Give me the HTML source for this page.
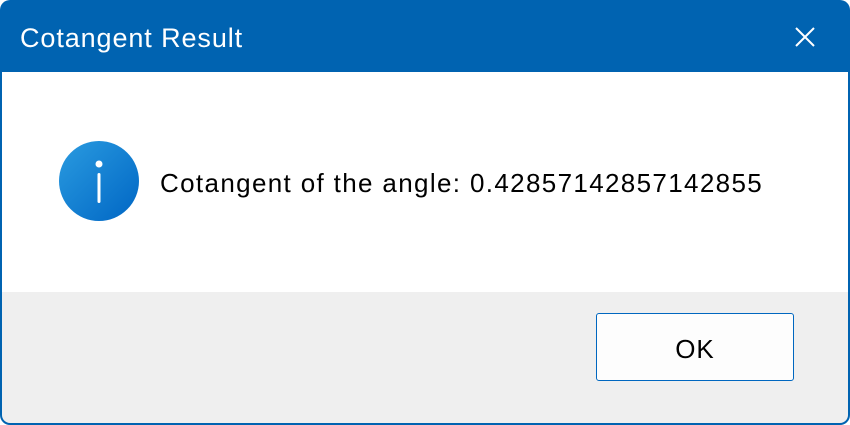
<!DOCTYPE html>
<html><head><style>
html,body{margin:0;padding:0;background:#fff;width:850px;height:425px;overflow:hidden}
.win{position:absolute;left:0;top:0;width:850px;height:425px;box-sizing:border-box;background:#0063b1;border-radius:10px;overflow:hidden}
.title{position:absolute;left:20px;top:20px;color:#fff;font:27px "Liberation Sans",sans-serif;line-height:36px;letter-spacing:0.9px}
.body{position:absolute;left:2px;right:2px;top:72px;height:220px;background:#fff}
.foot{position:absolute;left:2px;right:2px;top:292px;bottom:2px;background:#efefef;border-radius:0 0 8px 8px}
.msg{position:absolute;left:160px;top:167px;font:26px "Liberation Sans",sans-serif;color:#000;line-height:32px;letter-spacing:1.35px;white-space:nowrap}
.btn{position:absolute;left:596px;top:313px;width:196px;height:66px;border:1px solid #0067c0;border-radius:3px;background:#fdfdfd;font:26px "Liberation Sans",sans-serif;text-align:center;line-height:70px;letter-spacing:1px}
</style></head><body>
<div class="win">
<div class="title">Cotangent Result</div>
<svg style="position:absolute;left:795px;top:27px" width="20" height="20"><path d="M1 1L19 19M19 1L1 19" stroke="#fff" stroke-width="2"/></svg>
<div class="body"></div>
<div class="foot"></div>
<svg style="position:absolute;left:59px;top:141px" width="80" height="80"><defs><linearGradient id="g" x1="0" y1="0" x2="1" y2="1"><stop offset="0" stop-color="#2a9be0"/><stop offset="1" stop-color="#0066c4"/></linearGradient></defs><circle cx="40" cy="40" r="40" fill="url(#g)"/><circle cx="40" cy="23" r="3.5" fill="#fff"/><rect x="38.5" y="32" width="3" height="30" rx="1.5" fill="#fff"/></svg>
<div class="msg">Cotangent of the angle: 0.42857142857142855</div>
<div class="btn">OK</div>
</div>
</body></html>
